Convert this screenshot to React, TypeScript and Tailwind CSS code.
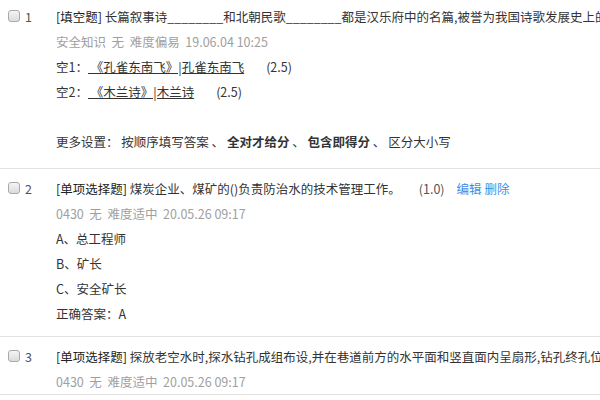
const font = { fontFamily: '"Microsoft YaHei", "Noto Sans CJK SC", "Liberation Sans", sans-serif' };

function Checkbox() {
  return (
    <span className="mt-[6px] block h-[12px] w-[12px] shrink-0 rounded-[3px] border border-[#a9a9a9] bg-gradient-to-b from-[#f4f4f4] to-[#dcdcdc]" />
  );
}

function Question({
  no,
  type,
  title,
  meta,
  children,
  className = "",
}: {
  no: number;
  type: string;
  title: React.ReactNode;
  meta: string;
  children?: React.ReactNode;
  className?: string;
}) {
  return (
    <div className={`flex border-b border-[#e2e2e2] pl-[8px] ${className}`}>
      <Checkbox />
      <span className="ml-[5px] w-[31px] shrink-0 leading-[25px] text-[#555]">{no}</span>
      <div className="min-w-0 flex-1 overflow-hidden">
        <div className="whitespace-nowrap leading-[25px] text-[#333]">
          <span className="text-[#222]">[{type}]</span> {title}
        </div>
        <div className="whitespace-pre leading-[25px] text-[#a0a0a0]">{meta}</div>
        {children}
      </div>
    </div>
  );
}

export default function App() {
  const blank = "________";
  return (
    <div className="h-[400px] w-[600px] overflow-hidden bg-white text-[12.5px]" style={font}>
      <Question
        no={1}
        type="填空题"
        className="pb-[14px] pt-[4px]"
        title={`长篇叙事诗${blank}和北朝民歌${blank}都是汉乐府中的名篇,被誉为我国诗歌发展史上的双璧。`}
        meta="安全知识  无  难度偏易  19.06.04 10:25"
      >
        <div className="whitespace-nowrap leading-[25px] text-[#333]">
          空1：<span className="underline">&nbsp;《孔雀东南飞》|孔雀东南飞</span>
          <span className="ml-[22px]">(2.5)</span>
        </div>
        <div className="whitespace-nowrap leading-[25px] text-[#333]">
          空2：<span className="underline">&nbsp;《木兰诗》|木兰诗</span>
          <span className="ml-[22px]">(2.5)</span>
        </div>
        <div className="h-[25px]" />
        <div className="whitespace-nowrap leading-[25px] text-[#333]">
          更多设置： 按顺序填写答案 、 <b>全对才给分</b> 、 <b>包含即得分</b> 、 区分大小写
        </div>
      </Question>

      <Question
        no={2}
        type="单项选择题"
        className="pb-[10px] pt-[7px]"
        title={
          <>
            煤炭企业、煤矿的()负责防治水的技术管理工作。
            <span className="ml-[18px] text-[#555]">(1.0)</span>
            <span className="ml-[12px] text-[#3d8ee8]">编辑</span>{" "}
            <span className="text-[#3d8ee8]">删除</span>
          </>
        }
        meta="0430  无  难度适中  20.05.26 09:17"
      >
        {["A、总工程师", "B、矿长", "C、安全矿长", "正确答案：A"].map((t) => (
          <div key={t} className="leading-[25px] text-[#333]">
            {t}
          </div>
        ))}
      </Question>

      <Question
        no={3}
        type="单项选择题"
        className="pt-[7px]"
        title="探放老空水时,探水钻孔成组布设,并在巷道前方的水平面和竖直面内呈扇形,钻孔终孔位置满足水平面间距不得超过3m。"
        meta="0430  无  难度适中  20.05.26 09:17"
      />
    </div>
  );
}
